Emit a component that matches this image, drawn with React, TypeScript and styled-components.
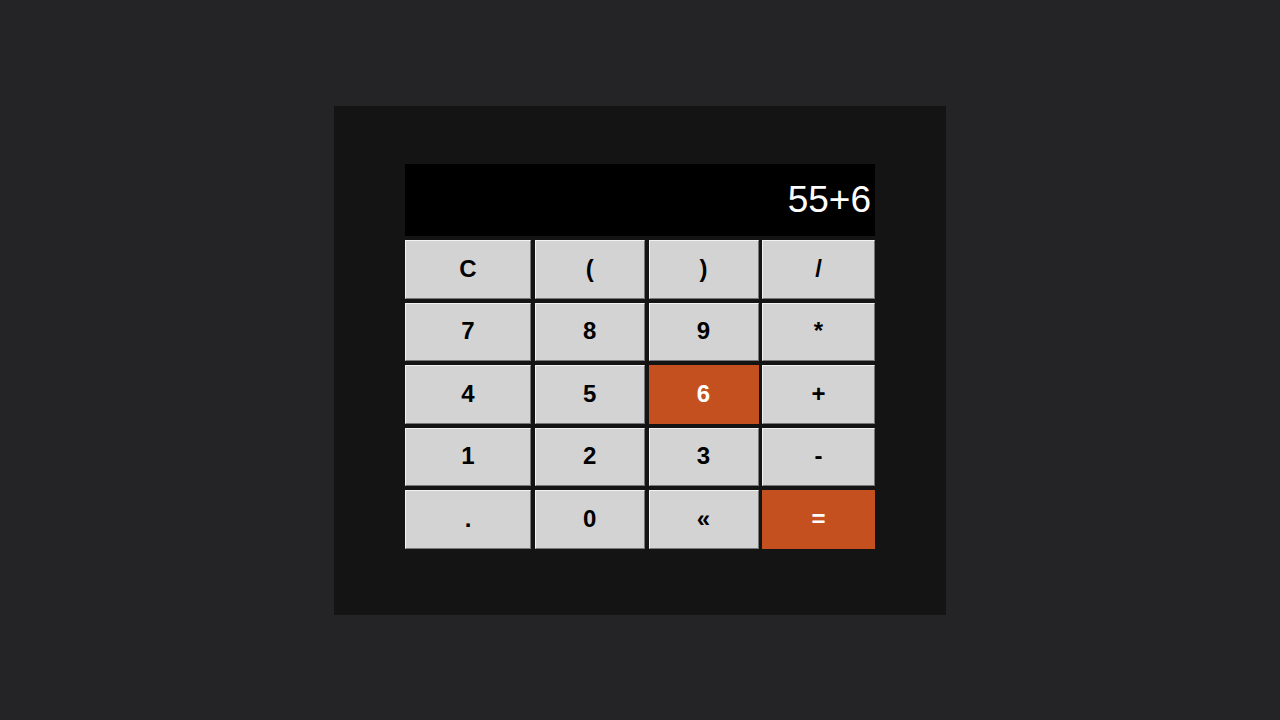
import React from "react";
import styled, { createGlobalStyle } from "styled-components";

const Global = createGlobalStyle`
  html, body { margin: 0; padding: 0; background: #242426; }
  body { font-family: "Liberation Sans", Arial, sans-serif; }
`;

const Page = styled.div`
  width: 1280px;
  height: 720px;
  display: flex;
  justify-content: center;
  padding-top: 106px;
  box-sizing: border-box;
`;

const Panel = styled.div`
  width: 612px;
  height: 509px;
  box-sizing: border-box;
  background: #141414;
  padding: 58px 71px 0 71px;
  display: flex;
  flex-direction: column;
  gap: 4px;
`;

const Display = styled.div`
  height: 72px;
  background: #000;
  color: #fff;
  font-size: 37px;
  display: flex;
  align-items: center;
  justify-content: flex-end;
  padding-right: 4px;
  box-sizing: border-box;
`;

const Keys = styled.div`
  display: grid;
  grid-template-columns: 126px 110.5px 110px 113px;
  grid-auto-rows: 58.5px;
  column-gap: 3.5px;
  row-gap: 4px;
`;

const Key = styled.button<{ $accent?: boolean }>`
  margin: 0;
  padding: 0 0 1px 0;
  font-family: "Liberation Sans", Arial, sans-serif;
  font-weight: bold;
  font-size: 24px;
  background: ${(p) => (p.$accent ? "#c4501f" : "#d3d3d3")};
  color: ${(p) => (p.$accent ? "#fff" : "#000")};
  border: 1px solid;
  border-color: ${(p) =>
    p.$accent ? "#c4501f" : "#f2f2f2 #777 #777 #f2f2f2"};
  display: flex;
  align-items: center;
  justify-content: center;
`;

const keys: { label: string; accent?: boolean }[] = [
  { label: "C" },
  { label: "(" },
  { label: ")" },
  { label: "/" },
  { label: "7" },
  { label: "8" },
  { label: "9" },
  { label: "*" },
  { label: "4" },
  { label: "5" },
  { label: "6", accent: true },
  { label: "+" },
  { label: "1" },
  { label: "2" },
  { label: "3" },
  { label: "-" },
  { label: "." },
  { label: "0" },
  { label: "«" },
  { label: "=", accent: true },
];

export default function App() {
  return (
    <>
      <Global />
      <Page>
        <Panel>
          <Display>55+6</Display>
          <Keys>
            {keys.map((k) => (
              <Key key={k.label} $accent={k.accent}>
                {k.label}
              </Key>
            ))}
          </Keys>
        </Panel>
      </Page>
    </>
  );
}
